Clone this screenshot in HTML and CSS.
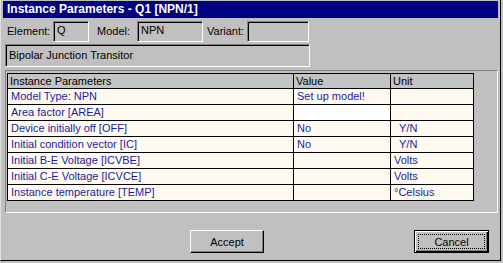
FILE: index.html
```html
<!DOCTYPE html>
<html>
<head>
<meta charset="utf-8">
<link rel="stylesheet" href="styles.css">
</head>
<body>
<div class="window">
  <div class="titlebar">Instance Parameters - Q1 [NPN/1]</div>
  <div class="row1">
    <span class="lbl lbl-element">Element:</span>
    <span class="field f-element">Q</span>
    <span class="lbl lbl-model">Model:</span>
    <span class="field f-model">NPN</span>
    <span class="lbl lbl-variant">Variant:</span>
    <span class="field f-variant"></span>
  </div>
  <div class="field desc">Bipolar Junction Transitor</div>
  <div class="panel">
    <table class="grid">
      <colgroup><col class="c1"><col class="c2"><col class="c3"></colgroup>
      <tr class="head"><td>Instance Parameters</td><td>Value</td><td>Unit</td></tr>
      <tr><td>Model Type: NPN</td><td>Set up model!</td><td></td></tr>
      <tr><td>Area factor [AREA]</td><td class="edit"></td><td></td></tr>
      <tr><td>Device initially off [OFF]</td><td>No</td><td class="ind">Y/N</td></tr>
      <tr><td>Initial condition vector [IC]</td><td>No</td><td class="ind">Y/N</td></tr>
      <tr><td>Initial B-E Voltage [ICVBE]</td><td></td><td>Volts</td></tr>
      <tr><td>Initial C-E Voltage [ICVCE]</td><td></td><td>Volts</td></tr>
      <tr><td>Instance temperature [TEMP]</td><td></td><td>°Celsius</td></tr>
    </table>
  </div>
  <div class="buttons">
    <div class="btn accept">Accept</div>
    <div class="btn cancel"><span class="focus">Cancel</span></div>
  </div>
</div>
</body>
</html>
```
FILE: styles.css
```css
html, body {
  margin: 0;
  padding: 0;
  background: #c0c0c0;
}
body {
  font-family: "Liberation Sans", Arial, sans-serif;
  font-size: 11px;
  color: #000;
}
.window {
  width: 501px;
  height: 261px;
  box-sizing: border-box;
  background: #c0c0c0;
  border-left: 1px solid #dfdfdf;
  border-right: 1px solid #000;
  border-bottom: 1px solid #000;
  padding: 1px 2px 0 2px;
}
.titlebar {
  height: 17px;
  line-height: 17px;
  background: #000080;
  color: #fff;
  font-weight: bold;
  font-size: 12px;
  padding-left: 4px;
}
.row1 {
  display: flex;
  align-items: center;
  margin-top: 3px;
  height: 21px;
}
.lbl {
  line-height: 21px;
}
.lbl-element { margin-left: 4px; width: 46px; }
.lbl-model { margin-left: 8px; width: 40px; }
.lbl-variant { margin-left: 4px; width: 40px; }
.field {
  box-sizing: border-box;
  height: 21px;
  background: #c0c0c0;
  border-top: 1px solid #808080;
  border-left: 1px solid #808080;
  border-right: 1px solid #fff;
  border-bottom: 1px solid #fff;
  box-shadow: inset 1px 1px 0 #000;
  padding: 2px 0 0 3px;
  line-height: 13px;
}
.f-element { width: 36px; }
.f-model { width: 66px; }
.f-variant { width: 62px; }
.desc {
  margin-top: 2px;
  margin-left: 2px;
  width: 305px;
  height: 23px;
  padding-top: 4px;
}
.panel {
  margin: 3px 0 0 2px;
  width: 493px;
  height: 143px;
  box-sizing: border-box;
  border-top: 1px solid #808080;
  border-left: 1px solid #808080;
  border-right: 1px solid #fff;
  border-bottom: 1px solid #fff;
  padding: 2px 0 0 1px;
}
.grid {
  border-collapse: collapse;
  table-layout: fixed;
  width: 466px;
  border: 1px solid #000;
  background: #fffaf0;
  color: #1a1a9c;
}
.c1 { width: 286px; }
.c2 { width: 97px; }
.c3 { width: 83px; }
.grid td {
  border: 1px solid #000;
  height: 15px;
  padding: 0 0 0 3px;
  line-height: 15px;
  white-space: nowrap;
  overflow: hidden;
}
.grid tr.head td {
  background: #c4c4c4;
  color: #000;
  height: 14px;
  line-height: 14px;
  padding-left: 2px;
}
.grid td.edit { background: #fff; }
.grid td.ind { padding-left: 8px; }
.buttons {
  display: flex;
  margin-top: 17px;
  height: 23px;
}
.btn {
  box-sizing: border-box;
  height: 23px;
  display: flex;
  align-items: center;
  justify-content: center;
  background: #c0c0c0;
  border-top: 1px solid #fff;
  border-left: 1px solid #fff;
  border-right: 1px solid #000;
  border-bottom: 1px solid #000;
  box-shadow: inset -1px -1px 0 #808080;
}
.accept {
  margin-left: 187px;
  width: 74px;
}
.cancel {
  margin-left: 150px;
  width: 75px;
  border: 1px solid #000;
  box-shadow: inset 1px 1px 0 #fff, inset -1px -1px 0 #000, inset -2px -2px 0 #808080;
  padding: 3px;
}
.focus {
  flex: 1;
  align-self: stretch;
  display: flex;
  align-items: center;
  justify-content: center;
  border: 1px dotted #000;
}
```
